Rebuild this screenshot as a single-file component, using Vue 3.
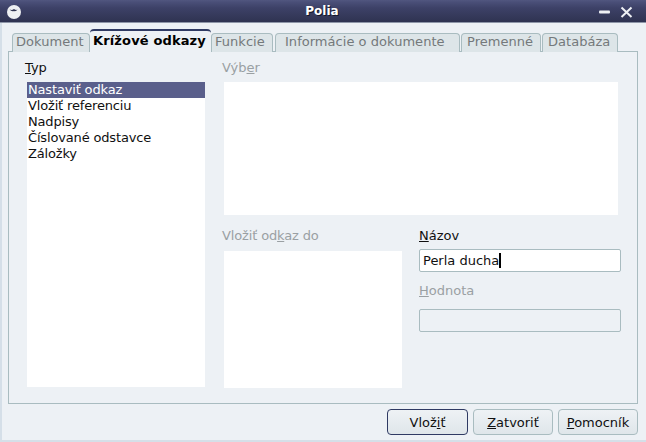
<script setup>
const tabs = [
  { label: 'Dokument', width: 78, pad: 3 },
  { label: 'Krížové odkazy', width: 121, pad: 3, active: true },
  { label: 'Funkcie', width: 62, pad: 3 },
  { label: 'Informácie o dokumente', width: 185, pad: 9, gap: 2 },
  { label: 'Premenné', width: 80, pad: 5, gap: 1 },
  { label: 'Databáza', width: 76, pad: 5, gap: 1 }
]
const items = ['Vložiť referenciu', 'Nadpisy', 'Číslované odstavce', 'Záložky']
</script>

<template>
  <div class="window">
    <header class="titlebar">
      <svg class="app-icon" width="16" height="16" viewBox="0 0 16 16">
        <circle cx="8" cy="8" r="7" fill="#eef0f2" />
        <path d="M3.500 5.500 Q6 6.500 8 5 Q10 6.500 11.500 5.500 Q10 7.800 8 7 Q5.500 7.800 3.500 5.500Z" fill="#2e3350" />
      </svg>
      <span class="title">Polia</span>
      <svg class="controls" width="34" height="12" viewBox="0 0 34 12">
        <rect x="0" y="4.500" width="11" height="3" rx="1" fill="#eef0f4" />
        <path d="M22.500 1.500 L32.500 11 M32.500 1.500 L22.500 11" stroke="#eef0f4" stroke-width="2" fill="none" />
      </svg>
    </header>

    <main class="body">
      <nav class="tabs">
        <div
          v-for="tab in tabs"
          :key="tab.label"
          class="tab"
          :class="{ active: tab.active }"
          :style="{ width: tab.width + 'px', marginLeft: (tab.gap || 0) + 'px', paddingLeft: tab.pad + 'px' }"
        >{{ tab.label }}</div>
      </nav>

      <section class="panel">
        <div class="col-left">
          <label class="label"><u>T</u>yp</label>
          <div class="listbox tall">
            <div class="row selected">Nastaviť odkaz</div>
            <div v-for="item in items" :key="item" class="row">{{ item }}</div>
          </div>
        </div>

        <div class="col-right">
          <label class="label off">Výb<u>e</u>r</label>
          <div class="listbox preview"></div>

          <div class="lower">
            <div class="lower-left">
              <label class="label off narrow">Vložiť od<u>k</u>az do</label>
              <div class="listbox target"></div>
            </div>
            <div class="lower-right">
              <label class="label flush"><u>N</u>ázov</label>
              <div class="input name">Perla ducha<span class="caret"></span></div>
              <label class="label flush off value-label"><u>H</u>odnota</label>
              <div class="input disabled"></div>
            </div>
          </div>
        </div>
      </section>

      <footer class="buttons">
        <button class="btn default">Vlož<u>i</u>ť</button>
        <button class="btn"><u>Z</u>atvoriť</button>
        <button class="btn"><u>P</u>omocník</button>
      </footer>
    </main>
  </div>
</template>

<style>
html, body { margin: 0; padding: 0; background: #edf1f5; }
</style>

<style scoped>
.window {
  width: 646px;
  height: 442px;
  display: flex;
  flex-direction: column;
  overflow: hidden;
  font-family: "DejaVu Sans", sans-serif;
  font-size: 13px;
  color: #101010;
  background: #edf1f5;
}
.titlebar {
  height: 23px;
  flex: none;
  box-sizing: border-box;
  display: flex;
  align-items: center;
  justify-content: center;
  padding-right: 2px;
  position: relative;
  background: linear-gradient(#51567f 0, #4a4f78 2px, #3d4167 8px, #2f3351 22px);
  border-bottom: 1px solid #8e96a8;
}
.app-icon { position: absolute; left: 6px; top: 4px; }
.controls { position: absolute; left: 599px; top: 6px; }
.title {
  color: #fff;
  font-weight: 700;
  font-size: 12px;
  text-shadow: 1px 1px 0 #15172a;
}
.body {
  flex: 1;
  min-height: 0;
  box-sizing: border-box;
  padding: 6px 8px 0 6px;
  border-left: 2px solid #d5dfe8;
  border-bottom: 2px solid #d5dfe8;
  display: flex;
  flex-direction: column;
}
.tabs {
  display: flex;
  align-items: flex-end;
  height: 23px;
  padding-left: 4px;
  margin-bottom: -1px;
  position: relative;
  z-index: 1;
  flex: none;
}
.tab {
  box-sizing: border-box;
  height: 19px;
  text-align: left;
  line-height: 15px;
  color: #74797b;
  background: #dde5e8;
  border: 1px solid #a9bcc0;
  border-bottom: none;
  border-radius: 4px 4px 0 0;
  white-space: nowrap;
  letter-spacing: 0.03px;
}
.tab.active {
  height: 23px;
  line-height: 20px;
  color: #000;
  font-weight: 700;
  background: #edf1f5;
  border: none;
  border-top: 2px solid #2f3a63;
  border-radius: 4px 4px 0 0;
  letter-spacing: 0.14px;
}
.panel {
  width: 630px;
  height: 353px;
  box-sizing: border-box;
  flex: none;
  border: 1px solid #a9bcc0;
  padding: 8px 0 0 18px;
  display: flex;
  gap: 19px;
}
.col-left { width: 178px; flex: none; }
.col-right { flex: 1; min-width: 0; }
.label {
  display: block;
  height: 16px;
  line-height: 16px;
  margin: 0 0 6px -2px;
}
.label.flush { margin-left: 0; }
.label.off { color: #9aa0a3; }
.label.narrow { letter-spacing: -0.14px; margin-bottom: 7px; }
.listbox { background: #fff; }
.tall { height: 305px; }
.preview { width: 394px; height: 133px; }
.row {
  height: 16px;
  line-height: 16px;
  padding-left: 1px;
  white-space: nowrap;
  letter-spacing: -0.16px;
}
.row.selected { background: #5a5f8b; color: #fff; }
.lower {
  display: flex;
  gap: 17px;
  margin-top: 13px;
}
.lower-left { width: 178px; flex: none; }
.target { height: 137px; }
.lower-right { width: 202px; flex: none; }
.lower-right .label:first-child { margin-bottom: 5px; }
.input {
  box-sizing: border-box;
  width: 202px;
  height: 23px;
  border: 1px solid #a9bcc0;
  border-radius: 2px;
  line-height: 21px;
  padding-left: 3px;
  background: #fff;
  white-space: nowrap;
}
.input.disabled { background: #edf1f5; }
.caret {
  display: inline-block;
  width: 2px;
  height: 15px;
  background: #000;
  vertical-align: -3px;
}
.lower-right .value-label { margin-top: 11px; margin-bottom: 10px; }
.buttons {
  display: flex;
  justify-content: flex-end;
  gap: 5px;
  width: 630px;
  margin-top: 5px;
  flex: none;
}
.btn {
  box-sizing: border-box;
  width: 80px;
  height: 26px;
  padding: 0;
  font: inherit;
  color: #101010;
  border: 1px solid #a9bcc0;
  border-radius: 4px;
  background: linear-gradient(#eef2f5, #dfe6ea);
}
.btn.default {
  width: 81px;
  border-color: #2f3a63;
}
</style>
